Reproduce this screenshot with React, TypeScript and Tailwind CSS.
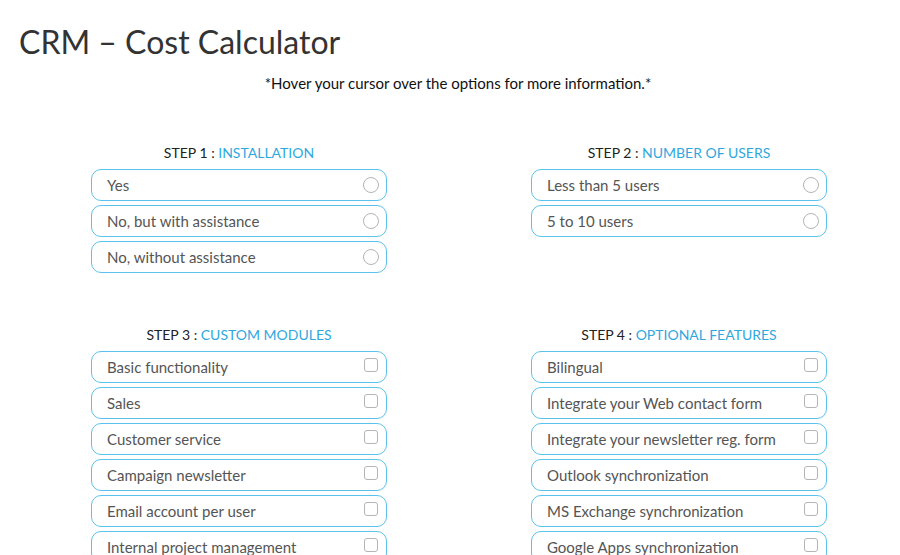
const steps = [
  {
    n: 1,
    title: "INSTALLATION",
    kind: "radio",
    options: ["Yes", "No, but with assistance", "No, without assistance"],
  },
  {
    n: 2,
    title: "NUMBER OF USERS",
    kind: "radio",
    options: ["Less than 5 users", "5 to 10 users"],
  },
  {
    n: 3,
    title: "CUSTOM MODULES",
    kind: "check",
    options: [
      "Basic functionality",
      "Sales",
      "Customer service",
      "Campaign newsletter",
      "Email account per user",
      "Internal project management",
    ],
  },
  {
    n: 4,
    title: "OPTIONAL FEATURES",
    kind: "check",
    options: [
      "Bilingual",
      "Integrate your Web contact form",
      "Integrate your newsletter reg. form",
      "Outlook synchronization",
      "MS Exchange synchronization",
      "Google Apps synchronization",
    ],
  },
];

function Option({ label, kind }: { label: string; kind: string }) {
  return (
    <label className="flex h-[32px] items-center justify-between rounded-[10px] border-[1.5px] border-[#5cc2ec] bg-white pl-[15px] pr-[7px] text-[15px] text-[#555]">
      <span>{label}</span>
      {kind === "radio" ? (
        <span className="h-[16px] w-[16px] rounded-full border border-[#b5b5b5]" />
      ) : (
        <span className="mr-[1px] mb-[4px] h-[14px] w-[14px] rounded-[3px] border border-[#b5b5b5]" />
      )}
    </label>
  );
}

function Step({ step }: { step: (typeof steps)[number] }) {
  return (
    <div className="flex w-[296px] flex-col">
      <div className="mb-[6px] text-center text-[14px] leading-[20px] text-[#222]">
        STEP {step.n} : <span className="text-[#2fa8de]">{step.title}</span>
      </div>
      <div className="flex flex-col gap-[4px]">
        {step.options.map((o) => (
          <Option key={o} label={o} kind={step.kind} />
        ))}
      </div>
    </div>
  );
}

export default function App() {
  return (
    <div className="h-[555px] w-[900px] overflow-hidden bg-white font-['Lato',sans-serif]">
      <h1 className="pl-[19px] pt-[20px] text-[32px] leading-[44px] text-[#333]">
        CRM – Cost Calculator
      </h1>
      <p className="mt-[7px] pl-[16px] text-center text-[15px] leading-[24px] text-[#111]">
        *Hover your cursor over the options for more information.*
      </p>
      <div className="mt-[48px] grid grid-cols-[296px_296px] gap-x-[144px] gap-y-[52px] pl-[91px]">
        {steps.map((s) => (
          <Step key={s.n} step={s} />
        ))}
      </div>
    </div>
  );
}
